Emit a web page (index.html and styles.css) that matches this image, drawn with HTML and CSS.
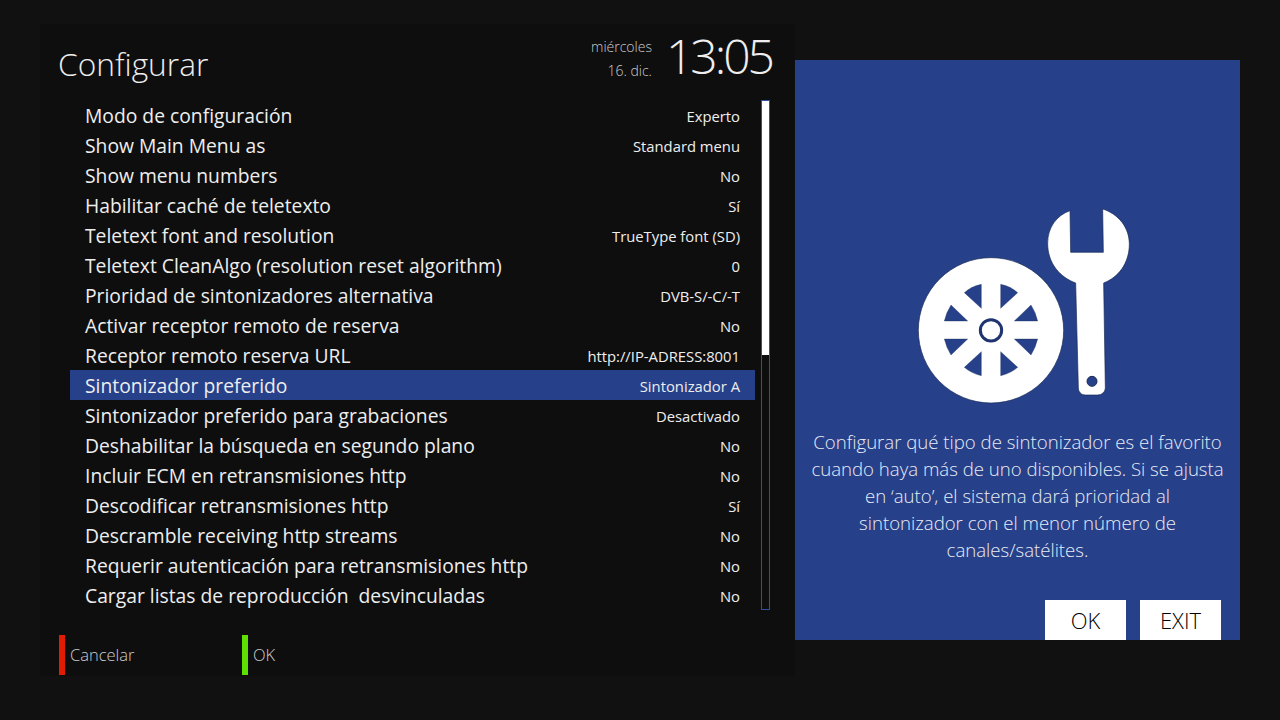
FILE: index.html
```html
<!DOCTYPE html>
<html lang="es">
<head>
  <meta charset="UTF-8">
  <title>Configurar</title>
  <link rel="stylesheet" href="styles.css">
</head>
<body>
  <div class="main">
    <div class="header">
      <div class="title">Configurar</div>
      <div class="date">
        <div>miércoles</div>
        <div>16. dic.</div>
      </div>
      <div class="clock">13:05</div>
    </div>
    <div class="content">
      <div class="list">
        <div class="row"><span>Modo de configuración</span><span class="value">Experto</span></div>
        <div class="row"><span>Show Main Menu as</span><span class="value">Standard menu</span></div>
        <div class="row"><span>Show menu numbers</span><span class="value">No</span></div>
        <div class="row"><span>Habilitar caché de teletexto</span><span class="value">Sí</span></div>
        <div class="row"><span>Teletext font and resolution</span><span class="value">TrueType font (SD)</span></div>
        <div class="row"><span>Teletext CleanAlgo (resolution reset algorithm)</span><span class="value">0</span></div>
        <div class="row"><span>Prioridad de sintonizadores alternativa</span><span class="value">DVB-S/-C/-T</span></div>
        <div class="row"><span>Activar receptor remoto de reserva</span><span class="value">No</span></div>
        <div class="row"><span>Receptor remoto reserva URL</span><span class="value">http://IP-ADRESS:8001</span></div>
        <div class="row selected"><span>Sintonizador preferido</span><span class="value">Sintonizador A</span></div>
        <div class="row"><span>Sintonizador preferido para grabaciones</span><span class="value">Desactivado</span></div>
        <div class="row"><span>Deshabilitar la búsqueda en segundo plano</span><span class="value">No</span></div>
        <div class="row"><span>Incluir ECM en retransmisiones http</span><span class="value">No</span></div>
        <div class="row"><span>Descodificar retransmisiones http</span><span class="value">Sí</span></div>
        <div class="row"><span>Descramble receiving http streams</span><span class="value">No</span></div>
        <div class="row"><span>Requerir autenticación para retransmisiones http</span><span class="value">No</span></div>
        <div class="row"><span>Cargar listas de reproducción&nbsp; desvinculadas</span><span class="value">No</span></div>
      </div>
      <div class="scrollbar"><div class="thumb"></div></div>
    </div>
    <div class="footer">
      <div class="key red">Cancelar</div>
      <div class="key green">OK</div>
    </div>
  </div>

  <div class="side">
    <svg class="icon" viewBox="0 0 750 690" width="250" height="230">
      <defs>
        <g id="wedges">
          <path d="M29 -137 Q58 -131 80 -112 L29 -65 Z"/>
          <path d="M120 -75 Q134 -53 140 -27 L70 -27 Z"/>
        </g>
      </defs>
      <circle cx="273" cy="421" r="218" fill="#fff" stroke="#1a2a55" stroke-width="2"/>
      <g transform="translate(273 420)" fill="#26408a" stroke="#1a2a55" stroke-width="1">
        <use href="#wedges"/>
        <use href="#wedges" transform="scale(-1 1)"/>
        <use href="#wedges" transform="scale(1 -1)"/>
        <use href="#wedges" transform="scale(-1 -1)"/>
      </g>
      <circle cx="273" cy="421" r="32" fill="#fff" stroke="#1f3470" stroke-width="9"/>
      <path d="M510 62 L512 187 L610 187 L608 57 C655 72 688 112 688 162 C688 220 655 262 611 279 L616 592 C616 606 606 615 592 615 L557 615 C543 615 535 606 535 592 L527 279 C480 262 443 220 443 160 C443 112 470 76 510 62 Z" fill="#fff" stroke="#1a2a55" stroke-width="2"/>
      <circle cx="576" cy="574" r="15" fill="#26408a" stroke="#1a2a55" stroke-width="3"/>
    </svg>
    <p class="desc">Configurar qué tipo de sintonizador es el favorito cuando haya más de uno disponibles. Si se ajusta en ‘auto’, el sistema dará prioridad al sintonizador con el menor número de canales/satélites.</p>
    <div class="buttons">
      <div class="button">OK</div>
      <div class="button">EXIT</div>
    </div>
  </div>
</body>
</html>
```

FILE: styles.css
```css
body {
  margin: 0;
  width: 1280px;
  height: 720px;
  overflow: hidden;
  background-color: #111112;
  color: #eee;
  font-family: "Open Sans", sans-serif;
  display: flex;
  align-items: flex-start;
  padding-left: 40px;
  box-sizing: border-box;
}
.main {
  width: 755px;
  height: 652px;
  margin-top: 24px;
  background-color: #0e0e0f;
}
.header {
  height: 76px;
  display: flex;
  align-items: flex-start;
  padding: 0 23px 0 18px;
}
.title {
  font-size: 31.7px;
  font-weight: 300;
  line-height: 46px;
  margin-top: 17px;
  margin-right: auto;
}
.date {
  font-size: 14px;
  font-weight: 300;
  line-height: 24px;
  text-align: right;
  margin-top: 11px;
  margin-right: 14px;
  color: #ccc;
}
.clock {
  font-size: 48px;
  font-weight: 300;
  letter-spacing: -3px;
  line-height: 64px;
}
.content {
  display: flex;
  gap: 6px;
  margin-left: 30px;
}
.list {
  width: 685px;
}
.row {
  height: 30px;
  padding: 1px 15px 0;
  box-sizing: border-box;
  display: flex;
  justify-content: space-between;
  align-items: center;
  font-size: 19.3px;
  white-space: nowrap;
}
.value {
  font-size: 14.8px;
}
.selected {
  background-color: #26408a;
}
.scrollbar {
  width: 7px;
  height: 508px;
  border: 1px solid #2f4fa8;
}
.thumb {
  height: 254px;
  background-color: #fff;
}
.footer {
  display: flex;
  margin: 25px 0 0 19px;
}
.key {
  width: 172px;
  height: 40px;
  line-height: 40px;
  padding-left: 5px;
  border-left: 6px solid;
  font-size: 16.5px;
  font-weight: 300;
  color: #ccc;
}
.red {
  border-left-color: #e01c05;
}
.green {
  border-left-color: #5fe000;
}
.side {
  width: 445px;
  height: 580px;
  margin-top: 60px;
  background-color: #26408a;
  display: flex;
  flex-direction: column;
}
.icon {
  display: block;
  margin: 130px 0 0 105px;
}
.desc {
  margin: 8px 16px 0;
  font-size: 18.6px;
  font-weight: 300;
  line-height: 27px;
  text-align: center;
  color: #e8ecf5;
}
.buttons {
  margin-top: auto;
  display: flex;
  justify-content: flex-end;
  gap: 14px;
  padding-right: 19px;
}
.button {
  width: 81px;
  height: 40px;
  line-height: 41px;
  background-color: #fff;
  color: #000;
  text-align: center;
  font-size: 22px;
  font-weight: 300;
}
```
